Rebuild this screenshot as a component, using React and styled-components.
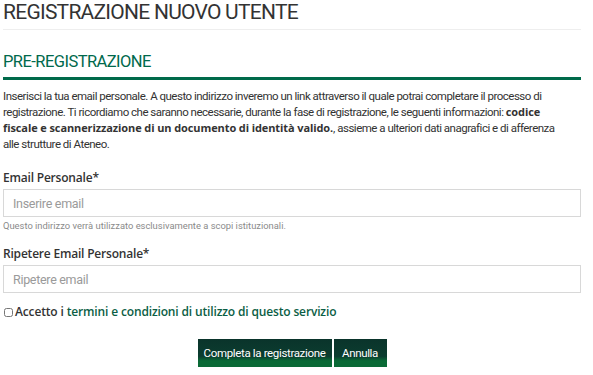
import styled, { createGlobalStyle } from "styled-components";

const GlobalStyle = createGlobalStyle`
  html, body {
    margin: 0;
    background: #fff;
  }
  body {
    font-family: Roboto, "Liberation Sans", sans-serif;
    color: #333;
  }
`;

const Page = styled.div`
  width: 578px;
  padding: 0 12px 0 3px;
`;

const Title = styled.h1`
  margin: 0;
  padding: 1px 0 6px;
  font-size: 21px;
  font-weight: 400;
  letter-spacing: -0.75px;
  line-height: 22px;
  color: #333;
  border-bottom: 1px solid #eee;
`;

const Section = styled.h2`
  margin: 22px 0 0;
  padding-bottom: 5px;
  font-size: 16.5px;
  font-weight: 400;
  letter-spacing: -0.55px;
  line-height: 20px;
  color: #00694c;
  border-bottom: 3px solid #006a4a;
`;

const Intro = styled.p`
  margin: 8px 0 0;
  font-size: 11.5px;
  letter-spacing: -0.5px;
  line-height: 16px;
  color: #333;
  white-space: nowrap;

  b {
    font-family: "Open Sans", sans-serif;
    font-weight: 700;
    font-size: 11px;
    letter-spacing: -0.1px;
  }
`;

const Field = styled.div`
  margin-top: ${(p) => p.$top}px;
  display: flex;
  flex-direction: column;
`;

const Label = styled.label`
  font-family: "Open Sans", sans-serif;
  font-weight: 600;
  font-size: 12px;
  letter-spacing: -0.2px;
  line-height: 18px;
  color: #333;
  margin-bottom: 2px;
`;

const Input = styled.input`
  box-sizing: border-box;
  width: 100%;
  height: 28px;
  border: 1px solid #d8d8d8;
  border-radius: 0;
  padding: 0 9px;
  font-family: Roboto, sans-serif;
  font-size: 12.5px;
  letter-spacing: -0.3px;
  color: #333;
  outline: none;

  &::placeholder {
    color: #9a9a9a;
  }
`;

const Help = styled.span`
  margin-top: 3px;
  font-size: 9.4px;
  line-height: 12px;
  color: #8a8a8a;
`;

const Accept = styled.label`
  display: block;
  margin-top: 10px;
  font-family: "Open Sans", sans-serif;
  font-weight: 600;
  font-size: 12px;
  letter-spacing: -0.15px;
  line-height: 18px;
  color: #333;

  input {
    margin: 0 2px 0 1px;
    width: 9px;
    height: 9px;
    vertical-align: -1px;
  }

  a {
    color: #0b5e45;
    text-decoration: none;
  }
`;

const Actions = styled.div`
  margin-top: 18px;
  display: flex;
  justify-content: center;
  gap: 2px;
`;

const Button = styled.button`
  width: ${(p) => p.$w}px;
  height: 28px;
  padding: 0;
  border: none;
  border-radius: 0;
  font-family: Roboto, sans-serif;
  font-size: 11.5px;
  letter-spacing: -0.35px;
  color: #fff;
  background: linear-gradient(
    #0a342b 0%,
    #0b3c2f 62%,
    #0a6a36 78%,
    #0a6a36 100%
  );
  cursor: pointer;
`;

export default function App() {
  return (
    <>
      <GlobalStyle />
      <Page>
        <Title>REGISTRAZIONE NUOVO UTENTE</Title>
        <Section>PRE-REGISTRAZIONE</Section>
        <Intro>
          Inserisci la tua email personale. A questo indirizzo inveremo un link
          attraverso il quale potrai completare il processo di
          <br />
          registrazione. Ti ricordiamo che saranno necessarie, durante la fase di
          registrazione, le seguenti informazioni: <b>codice</b>
          <br />
          <b>fiscale e scannerizzazione di un documento di identità valido.</b>,
          assieme a ulteriori dati anagrafici e di afferenza
          <br />
          alle strutture di Ateneo.
        </Intro>
        <Field $top={17}>
          <Label htmlFor="email">Email Personale*</Label>
          <Input id="email" placeholder="Inserire email" />
          <Help>
            Questo indirizzo verrà utilizzato esclusivamente a scopi istituzionali.
          </Help>
        </Field>
        <Field $top={13}>
          <Label htmlFor="email2">Ripetere Email Personale*</Label>
          <Input id="email2" placeholder="Ripetere email" />
        </Field>
        <Accept>
          <input type="checkbox" />
          Accetto i{" "}
          <a href="#">termini e condizioni di utilizzo di questo servizio</a>
        </Accept>
        <Actions>
          <Button $w={134}>Completa la registrazione</Button>
          <Button $w={53}>Annulla</Button>
        </Actions>
      </Page>
    </>
  );
}
